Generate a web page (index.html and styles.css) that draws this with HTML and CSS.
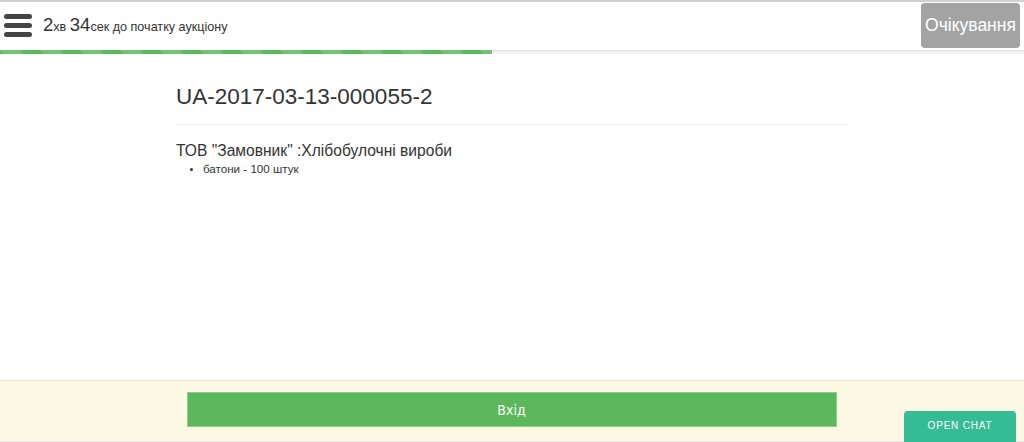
FILE: index.html
```html
<!DOCTYPE html>
<html lang="uk">
<head>
<meta charset="utf-8">
<title>Аукціон</title>
<link rel="stylesheet" href="styles.css">
</head>
<body>
<header class="topbar">
  <div class="topbar-left">
    <svg class="menu-icon" width="28" height="24" viewBox="0 0 28 24">
      <rect x="0" y="1" width="28" height="5" rx="2.5" fill="#444"/>
      <rect x="0" y="10" width="28" height="5" rx="2.5" fill="#444"/>
      <rect x="0" y="19" width="28" height="5" rx="2.5" fill="#444"/>
    </svg>
    <div class="timer"><span class="big">2</span>хв <span class="big">34</span>сек до початку аукціону</div>
  </div>
  <button class="status-btn">Очікування</button>
</header>
<div class="progress"><div class="progress-bar" style="width:48%"></div></div>
<main class="content">
  <h1 class="title">UA-2017-03-13-000055-2</h1>
  <hr class="divider">
  <h4 class="org">ТОВ "Замовник" :Хлібобулочні вироби</h4>
  <ul class="items"><li>батони - 100 штук</li></ul>
</main>
<footer class="footer">
  <button class="enter-btn">Вхід</button>
</footer>
<button class="chat-btn">OPEN CHAT</button>
</body>
</html>
```
FILE: styles.css
```css
html, body {
  margin: 0;
  padding: 0;
  height: 100%;
}
body {
  font-family: "Liberation Sans", Arial, sans-serif;
  color: #333;
  background: #fff;
  display: flex;
  flex-direction: column;
  overflow: hidden;
}
.topbar {
  height: 48px;
  border-top: 2px solid #d0d0d0;
  display: flex;
  align-items: center;
  justify-content: space-between;
  padding: 0 4px 0 4px;
  background: #fff;
}
.topbar-left {
  display: flex;
  align-items: center;
  gap: 11px;
}
.menu-icon {
  display: block;
  margin-top: -2px;
}
.timer {
  font-size: 12.6px;
  color: #333;
  margin-top: -2px;
}
.timer .big {
  font-size: 18.5px;
}
.status-btn {
  background: #a3a3a3;
  color: #fff;
  border: none;
  border-radius: 4px;
  font-family: "Liberation Sans", Arial, sans-serif;
  font-size: 17.5px;
  height: 45px;
  width: 99px;
  padding: 0;
  margin-top: -1px;
}
.progress {
  height: 4px;
  background: #f3f3f3;
  box-shadow: inset 0 1px 1px rgba(0,0,0,0.08);
}
.progress-bar {
  height: 100%;
  background-color: #5cb85c;
  background-image: linear-gradient(45deg, rgba(255,255,255,.15) 25%, transparent 25%, transparent 50%, rgba(255,255,255,.15) 50%, rgba(255,255,255,.15) 75%, transparent 75%, transparent);
  background-size: 40px 40px;
}
.content {
  width: 672px;
  margin: 0 auto;
  flex: 1;
}
.title {
  font-size: 22.5px;
  font-weight: 400;
  margin: 30px 0 0 0;
  line-height: 26px;
  color: #333;
}
.divider {
  border: 0;
  border-top: 1px solid #eee;
  margin: 14px 0 0 0;
}
.org {
  font-size: 15.6px;
  font-weight: 400;
  margin: 17px 0 0 0;
  line-height: 17px;
}
.items {
  margin: 3px 0 0 0;
  padding-left: 27px;
  font-size: 11.6px;
  line-height: 14px;
}
.items li::marker {
  font-size: 10px;
}
.footer {
  background: #fcf8e3;
  border-top: 1px solid #ebe6d0;
  border-bottom: 1px solid #e6e6e6;
  display: flex;
  justify-content: center;
  align-items: flex-start;
  padding-top: 11px;
  box-sizing: border-box;
  height: 62px;
}
.enter-btn {
  width: 650px;
  height: 35px;
  margin-left: -1px;
  background: #5cb85c;
  border: 1px solid #8ccf8c;
  color: #fff;
  font-family: "DejaVu Sans Condensed", "DejaVu Sans", sans-serif;
  font-size: 14px;
  padding: 0;
}
.chat-btn {
  position: fixed;
  right: 8px;
  bottom: 0;
  width: 112px;
  height: 31px;
  background: #35bc95;
  color: #fff;
  border: none;
  border-radius: 4px 4px 0 0;
  font-family: "Liberation Sans", Arial, sans-serif;
  font-size: 10px;
  letter-spacing: 0.8px;
  padding: 0 0 2px 0;
}
```
